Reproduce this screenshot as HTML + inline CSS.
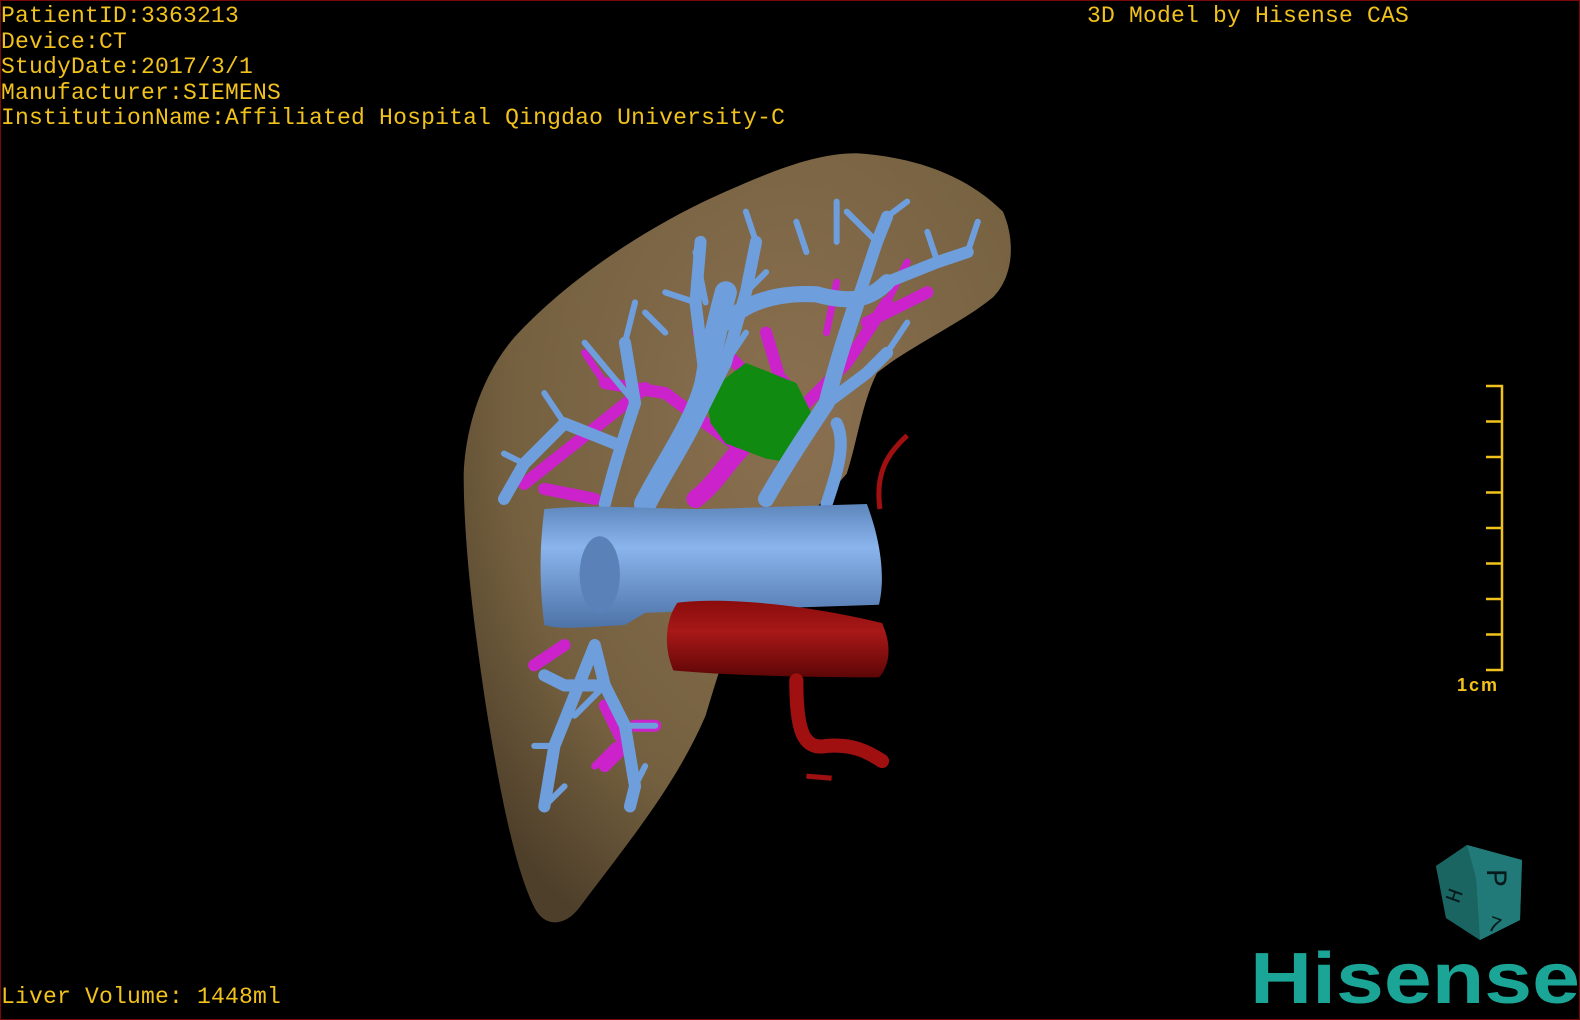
<!DOCTYPE html>
<html><head><meta charset="utf-8"><style>
html,body{margin:0;padding:0;background:#000;}
body{width:1580px;height:1020px;position:relative;overflow:hidden;}
.frame{position:absolute;left:0;top:0;width:1578px;height:1018px;border:1px solid #7a0a0a;}
.t{position:absolute;color:#f2c21c;font-family:"Liberation Mono",monospace;font-size:23px;line-height:25.6px;letter-spacing:0.2px;white-space:pre;}
</style></head><body>
<div class="frame"></div>
<div class="t" style="left:1px;top:4px">PatientID:3363213
Device:CT
StudyDate:2017/3/1
Manufacturer:SIEMENS
InstitutionName:Affiliated Hospital Qingdao University-C</div>
<div class="t" style="left:1087px;top:4px">3D Model by Hisense CAS</div>
<div class="t" style="left:1px;top:985px">Liver Volume: 1448ml</div>

<svg width="1580" height="1020" style="position:absolute;left:0;top:0">
<defs>
<radialGradient id="lv" cx="0.6" cy="0.35" r="0.75">
<stop offset="0" stop-color="#8a7050"/><stop offset="0.7" stop-color="#74603f"/><stop offset="1" stop-color="#4e3f2a"/></radialGradient>
<linearGradient id="ivc" x1="0" y1="0" x2="0" y2="1">
<stop offset="0" stop-color="#5d86bd"/><stop offset="0.35" stop-color="#8ab4ec"/><stop offset="1" stop-color="#4d73a8"/></linearGradient>
<linearGradient id="ao" x1="0" y1="0" x2="0" y2="1">
<stop offset="0" stop-color="#8a0c0c"/><stop offset="0.4" stop-color="#a81818"/><stop offset="1" stop-color="#5e0606"/></linearGradient>
</defs>
<g transform="scale(1.008)">
<path fill="url(#lv)" d="M460,470 C462,420 480,370 510,335 C560,280 640,225 720,190 C770,168 810,152 850,152 C910,156 960,175 995,210 C1008,240 1005,275 985,295 C955,320 900,345 870,370 C855,400 850,440 840,470 L760,560 C730,610 715,660 700,710 C670,780 620,840 575,900 C560,920 540,920 530,900 C510,860 495,780 482,700 C470,620 460,540 460,470Z"/>
<g fill="none" stroke-linecap="round" stroke="#cc22cc">
<path stroke-width="18" d="M690,495 C710,480 720,460 740,440 C760,420 770,400 775,380"/>
<path stroke-width="12" d="M740,440 C760,440 780,420 800,400 M735,445 L700,420 M775,380 L760,330 M800,400 L840,360 L880,300 M860,320 L920,290 M770,400 L720,350 M700,420 L660,390 L600,380 M640,385 L520,480 M540,485 L590,495 M560,640 L530,660 M600,700 L620,740 L600,760 M630,720 L650,720"/>
<path stroke-width="7" d="M820,330 L830,280 M880,300 L900,260 M600,380 L580,350 M610,740 L590,760 M720,350 L690,330"/>
</g>
<path fill="#118a11" d="M700,390 L740,360 L790,380 L810,420 L790,460 L760,455 L720,440 L705,420Z"/>
<g fill="none" stroke="#6f9edc" stroke-linecap="round" stroke-linejoin="round">
<path stroke-width="22" d="M640,500 C660,460 690,420 700,380 C705,350 712,320 720,290"/>
<path stroke-width="16" d="M720,320 C740,300 770,290 810,292 C840,300 860,300 880,280 M760,495 C780,460 800,430 820,400 C830,360 840,330 850,300"/>
<path stroke-width="12" d="M600,500 C610,460 620,430 630,400 L620,340 M610,440 L560,420 L520,460 L500,495 M690,420 L720,360 L740,290 L750,240 M700,380 L690,300 L695,240 M820,400 L860,370 L880,350 M850,300 L870,240 L880,215 M880,280 L930,260 L960,250 M820,500 C830,470 840,440 830,420 M590,640 L600,680 L620,720 L630,780 L625,800 M590,640 L570,690 L550,740 L540,800 M600,680 L560,680 L540,670"/>
<path stroke-width="6" d="M630,400 L580,340 M620,340 L630,300 M560,420 L540,390 M520,460 L500,450 M720,360 L740,330 M740,290 L760,270 M690,300 L660,290 M750,240 L740,210 M870,240 L840,210 M880,215 L900,200 M930,260 L920,230 M960,250 L970,220 M880,350 L900,320 M620,720 L650,720 M630,780 L640,760 M550,740 L530,740 M540,800 L560,780 M600,680 L570,710 M830,240 L830,200 M800,250 L790,220 M700,300 L690,250 M660,330 L640,310"/>
</g>
<path fill="url(#ivc)" d="M540,505 C600,500 640,505 700,505 L860,500 C875,540 878,575 872,600 L720,605 L640,608 L620,620 C580,622 555,625 540,620 C535,580 535,545 540,505Z"/>
<ellipse cx="595" cy="570" rx="20" ry="38" fill="#5a82b8"/>
<path fill="url(#ao)" d="M672,598 C720,592 800,600 875,618 C885,640 883,660 872,672 C800,672 720,670 668,665 C658,642 660,615 672,598Z"/>
<path fill="none" stroke="#a01010" stroke-width="14" stroke-linecap="round" d="M790,675 C790,720 795,745 820,740 C845,738 860,745 875,755"/>
<path fill="none" stroke="#a01010" stroke-width="5" d="M873,505 C868,470 880,450 900,432 M800,770 L825,772"/>
</g>
<g stroke="#f2c21c" stroke-width="2.5" fill="none">
<path d="M1486,386 H1502 V670 H1486 M1486,421.5 H1502 M1486,457 H1502 M1486,492.5 H1502 M1486,528 H1502 M1486,563.5 H1502 M1486,599 H1502 M1486,634.5 H1502"/>
</g>
<text x="1457" y="691" fill="#f2c21c" font-family="Liberation Sans,sans-serif" font-size="18" font-weight="bold" letter-spacing="2">1cm</text>
<g>
<polygon points="1436,866 1467,845 1522,860 1520,920 1480,940 1446,918" fill="#1d6f6c"/>
<polygon points="1467,845 1522,860 1520,920 1480,940 1476,878" fill="#217a77"/>
<polygon points="1436,866 1467,845 1476,878 1480,940 1446,918" fill="#1a6461"/>
<text x="1484" y="892" fill="#051a1a" font-family="Liberation Mono,monospace" font-size="30" transform="rotate(90 1497 882)">P</text>
<text x="1446" y="902" fill="#051a1a" font-family="Liberation Mono,monospace" font-size="22" transform="rotate(-70 1454 894)">H</text>
<text x="1488" y="932" fill="#051a1a" font-family="Liberation Mono,monospace" font-size="22" transform="rotate(20 1495 925)">7</text>
</g>
<text x="1250" y="1003" fill="#1aa597" font-family="Liberation Sans,sans-serif" font-size="72" font-weight="bold" textLength="330" lengthAdjust="spacingAndGlyphs">Hisense</text>
</svg>
</body></html>
